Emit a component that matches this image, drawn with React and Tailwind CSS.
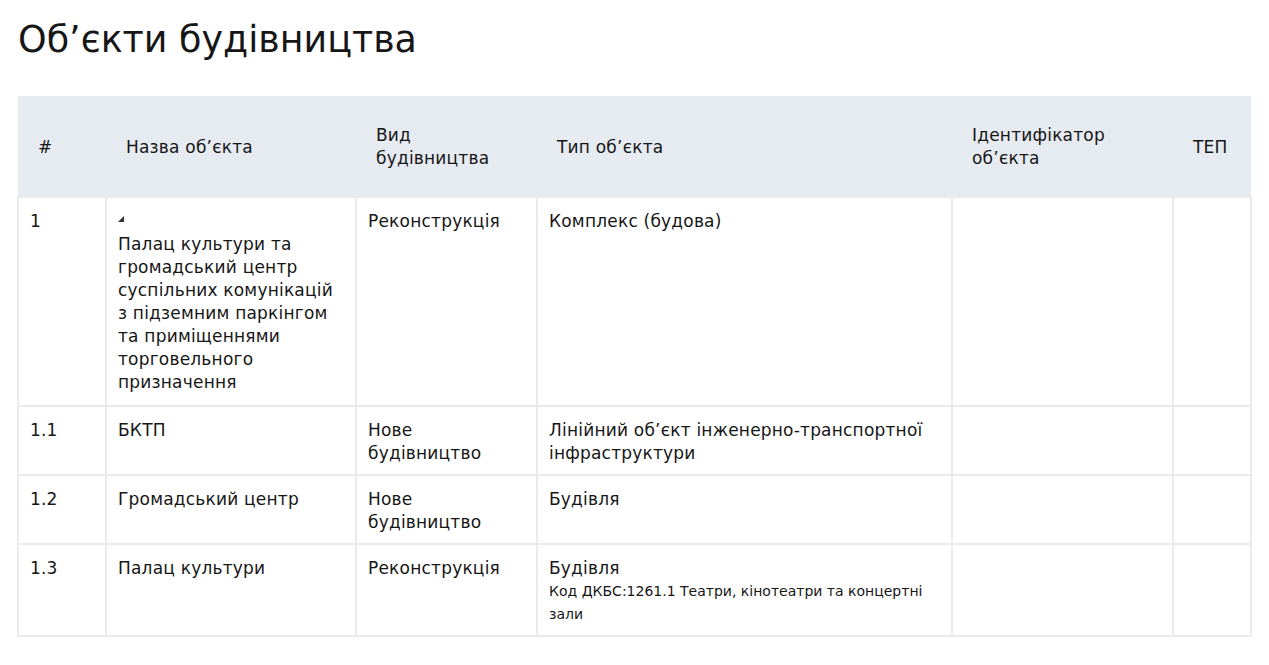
import React from 'react';

const rows = [
  {
    num: '1',
    marker: true,
    name: 'Палац культури та громадський центр суспільних комунікацій з підземним паркінгом та приміщеннями торговельного призначення',
    kind: 'Реконструкція',
    type: 'Комплекс (будова)',
  },
  { num: '1.1', name: 'БКТП', kind: 'Нове будівництво', type: 'Лінійний об’єкт інженерно-транспортної інфраструктури' },
  { num: '1.2', name: 'Громадський центр', kind: 'Нове будівництво', type: 'Будівля' },
  {
    num: '1.3',
    name: 'Палац культури',
    kind: 'Реконструкція',
    type: 'Будівля',
    note: 'Код ДКБС:1261.1 Театри, кінотеатри та концертні зали',
  },
];

const cell = 'border-2 border-[#ebebeb] pl-[11px] pr-3 pt-[12px] pb-[9px] align-top';

export default function App() {
  return (
    <div className="min-h-screen bg-white text-[#161616]" style={{ fontFamily: '"DejaVu Sans", "Noto Sans", sans-serif' }}>
      <h1 className="px-[18px] pt-[14px] text-[36.4px] leading-[52px] font-normal">Об’єкти будівництва</h1>

      <div className="px-[17px] pt-[30px]">
        <table className="w-[1233px] border-collapse table-fixed text-[17px] leading-[23px] tracking-[0.2px]">
          <colgroup>
            <col className="w-[88px]" />
            <col className="w-[250px]" />
            <col className="w-[181px]" />
            <col className="w-[415px]" />
            <col className="w-[221px]" />
            <col className="w-[78px]" />
          </colgroup>
          <thead>
            <tr className="bg-[#e6ebf2] h-[101px] text-left">
              <th className="px-5 pt-[2px] font-normal">#</th>
              <th className="px-5 pt-[2px] font-normal">Назва об’єкта</th>
              <th className="px-5 pt-[2px] font-normal">Вид будівництва</th>
              <th className="px-5 pt-[2px] font-normal">Тип об’єкта</th>
              <th className="px-5 pt-[2px] font-normal">Ідентифікатор об’єкта</th>
              <th className="px-5 pt-[2px] font-normal">ТЕП</th>
            </tr>
          </thead>
          <tbody>
            {rows.map((r) => (
              <tr key={r.num}>
                <td className={cell}>{r.num}</td>
                <td className={cell}>
                  {r.marker && (
                    <div className="h-[23px] pt-[6px]">
                      <span className="block w-[6px] h-[6px] bg-[#333]" style={{ clipPath: 'polygon(100% 0, 100% 100%, 0 100%)' }} />
                    </div>
                  )}
                  <div className={r.marker ? 'pb-[2px]' : ''}>{r.name}</div>
                </td>
                <td className={cell}>{r.kind}</td>
                <td className={cell}>
                  {r.type}
                  {r.note && <div className="text-[14px] leading-[23px] tracking-normal">{r.note}</div>}
                </td>
                <td className={cell}></td>
                <td className={cell}></td>
              </tr>
            ))}
          </tbody>
        </table>
      </div>
    </div>
  );
}
